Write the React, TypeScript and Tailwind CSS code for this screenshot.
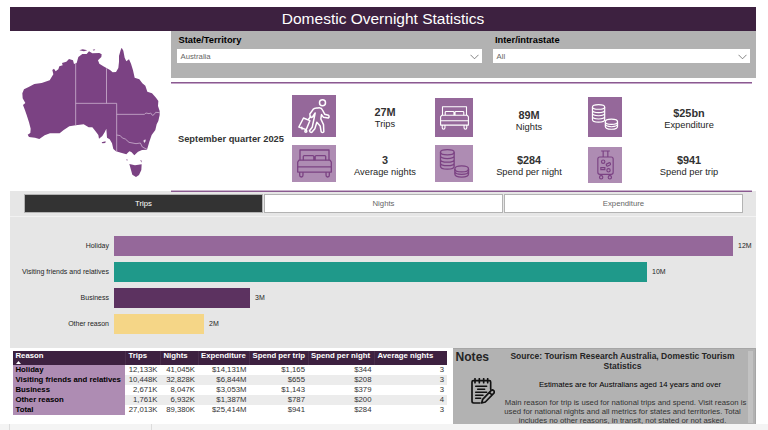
import type { ReactNode } from 'react'

const bars = [
  { label: 'Holiday', value: '12M', width: 619, color: 'bg-[#95689a]' },
  { label: 'Visiting friends and relatives', value: '10M', width: 533, color: 'bg-[#1f998a]' },
  { label: 'Business', value: '3M', width: 136, color: 'bg-[#5c3260]' },
  { label: 'Other reason', value: '2M', width: 90, color: 'bg-[#f5d687]' },
]

const rows = [
  ['Holiday', '12,133K', '41,045K', '$14,131M', '$1,165', '$344', '3'],
  ['Visiting friends and relatives', '10,448K', '32,828K', '$6,844M', '$655', '$208', '3'],
  ['Business', '2,671K', '8,047K', '$3,053M', '$1,143', '$379', '3'],
  ['Other reason', '1,761K', '6,932K', '$1,387M', '$787', '$200', '4'],
  ['Total', '27,013K', '89,380K', '$25,414M', '$941', '$284', '3'],
]

const headers = ['Trips', 'Nights', 'Expenditure', 'Spend per trip', 'Spend per night', 'Average nights']

function AustraliaMap() {
  return (
    <svg viewBox="0 -12 483 480" className="h-[160px] w-[161px] shrink-0">
      <g fill="#7b4283">
        <path d="M335 38L340 47L344 68L349 79L357 73L363 86L366 96L369 106L374 128L388 133L397 145L406 152L412 170L426 175L438 188L445 198L444 213L449 228L449 240L445 258L440 268L436 285L425 300L418 320L411 344L396 345L384 350L373 361L364 351L358 349L349 358L333 353L318 349L310 342L306 325L299 313L291 308L289 281L284 292L277 303L267 311L265 300L256 288L247 277L236 277L221 268L197 271L178 274L160 286L149 295L120 295L104 301L88 312L75 308L57 306L53 299L61 294L62 281L57 262L50 240L45 226L39 210L46 204L38 190L37 175L42 163L56 156L73 147L95 144L119 136L130 118L127 105L132 101L137 109L145 103L148 94L158 91L156 84L169 80L177 72L189 76L192 87L200 84L205 66L217 57L230 57L237 49L247 55L268 54L275 58L274 66L264 76L268 86L280 94L300 105L308 112L318 111L325 99L327 80L327 63L332 45Z" />
        <path d="M358 387L375 391L395 388L394 405L387 420L378 426L367 419L363 405Z" />
        <path d="M208 46L218 43L232 46L222 49ZM275 322L287 319L286 324L277 325ZM248 44L256 43L252 47ZM391 374L395 377L394 383ZM349 372L353 374L351 378Z" />
      </g>
      <g fill="none" stroke="#c9adcd" strokeWidth="2.5">
        <path d="M197 84V271M289.500 100V205M197 205H320V350M320 238H403L408 234L417 236L422 234L427 241L432 239L437 232L449 233" />
        <path d="M320 300L331 302L337 309L346 312L357 322L378 326L391 324L397 336L411 343" />
      </g>
      <path d="M400 317L406 313L407 318L403 324Z" fill="#efe4f0" />
    </svg>
  )
}

function Traveller() {
  return (
    <svg viewBox="0 0 131 126" className="h-[42px] w-[44px]" fill="none" stroke="#fff" strokeWidth="4.500" strokeLinejoin="round" strokeLinecap="round">
      <circle cx="91" cy="23" r="9" />
      <path d="M54 65L53 57L63 43Q67 38 77 39Q88 37 91 45L98 58L109 61Q113 66 108 69L94 67L88 59L86 72L94 89L95 110Q91 115 87 110L84 93L74 82L68 101L59 112Q53 113 52 107L60 97L66 69L69 54L61 66Q57 69 54 65Z" />
      <path d="M34 69L53 77L42 104L20 96ZM48 74L56 64M29 97L30 102" />
      <circle cx="41" cy="109" r="3" />
    </svg>
  )
}

function Bed({ className, color }: { className: string; color: string }) {
  return (
    <svg viewBox="0 0 106 88" className={className} fill="none" stroke={color} strokeWidth="4" strokeLinejoin="round">
      <path d="M9 34V3H97V34M19 34V23Q19 20 22 20H48Q51 20 51 23V34M55 34V23Q55 20 58 20H84Q87 20 87 23V34" />
      <path d="M6 34H100L104 40V70H2V40ZM2 54H104M8 70V80Q8 85 13 85T18 80V70M88 70V80Q88 85 93 85T98 80V70" />
    </svg>
  )
}

function Coins({ className, color }: { className: string; color: string }) {
  return (
    <svg viewBox="0 0 92 89" className={className} fill="none" stroke={color} strokeWidth="4">
      <ellipse cx="24" cy="10" rx="21" ry="8" />
      <path d="M3 10V53C3 65 45 65 45 53V10M3 21C3 32 45 32 45 21M3 32C3 43 45 43 45 32M3 43C3 54 45 54 45 43" />
      <ellipse cx="68" cy="61" rx="21" ry="9" />
      <path d="M47 61V76C47 90 89 90 89 76V61M47 68C47 81 89 81 89 68" />
    </svg>
  )
}

function Luggage() {
  return (
    <svg viewBox="0 0 50 90" className="h-[30px] w-[17px]" fill="none" stroke="#7b4283" strokeWidth="3.5">
      <rect x="2" y="21" width="46" height="52" rx="6" />
      <path d="M12 3H38M18 3V21M32 3V21M12 73V78M38 73V78" />
      <circle cx="12" cy="82" r="5" />
      <circle cx="38" cy="82" r="5" />
      <circle cx="18" cy="35" r="5" />
      <rect x="27" y="40" width="13" height="7" rx="3" transform="rotate(-25 33 43)" />
      <path d="M11 53H23V59H11Z" />
      <circle cx="34" cy="61" r="5" />
    </svg>
  )
}

function NotepadIcon() {
  return (
    <svg viewBox="0 0 72 78" className="h-[26px] w-[24px]" fill="none" stroke="#111" strokeWidth="5" strokeLinecap="round" strokeLinejoin="round">
      <path d="M59 34V12Q59 8 55 8H7Q3 8 3 12V70Q3 75 8 75H27M12 2V14M25 2V14M38 2V14M50 2V14" />
      <path d="M14 25H47M20 34H41M14 43H47M14 52H36M14 61H29" strokeWidth="4.500" />
      <path d="M60 38Q64 34 68 38T68 46L43 72L32 75L35 64ZM55 43L63 51" />
    </svg>
  )
}

function Select({ value }: { value: string }) {
  return (
    <div className="flex h-[14px] items-center justify-between bg-white pt-px pr-[3px] pl-[3.500px] text-[7.75px] text-[#666]">
      <span>{value}</span>
      <svg viewBox="0 0 9 6" className="h-[6px] w-[9px]" fill="none" stroke="#666" strokeWidth="0.8">
        <path d="M0.500 0.800L4.500 4.800L8.500 0.800" />
      </svg>
    </div>
  )
}

function Tile({ className, children }: { className: string; children: ReactNode }) {
  return <div className={`flex items-center justify-center ${className}`}>{children}</div>
}

function Metric({ value, label }: { value: string; label: string }) {
  return (
    <div className="text-center whitespace-nowrap">
      <div className="text-[10.9px] leading-[12px] font-bold text-[#333]">{value}</div>
      <div className="text-[9.3px] leading-[12px] text-[#252525]">{label}</div>
    </div>
  )
}

export default function App() {
  return (
    <div className="flex h-[430px] w-[768px] flex-col overflow-hidden bg-white pt-[7px] font-['Liberation_Sans',Arial,sans-serif]">
      <div className="ml-[10px] w-[746px]">
        <header className="flex h-[24px] items-center justify-center bg-[#3d2140] pb-px text-[15.5px] text-white">
          Domestic Overnight Statistics
        </header>

        <div className="flex h-[160px]">
          <AustraliaMap />
          <div className="flex w-[585px] flex-col">
            <div className="flex h-[46.500px] shrink-0 bg-[#b2b2b2] pl-[6px]">
              <div className="w-[305px]">
                <div className="h-[18px] pt-[2.500px] pl-[1.500px] text-[9.3px] leading-[12px] font-bold">State/Territory</div>
                <Select value="Australia" />
              </div>
              <div className="ml-[11px] w-[257px]">
                <div className="h-[18px] pt-[2.500px] pl-[2px] text-[9.3px] leading-[12px] font-bold">Inter/intrastate</div>
                <Select value="All" />
              </div>
            </div>
            <div className="mt-[4.500px] h-[2px] w-[581px] shrink-0 border-t border-[#8a5a90] bg-[#c4a5c8]" />

            <div className="flex h-[106px] shrink-0">
              <div className="w-[121px] pt-[49px] pl-[7px] text-[9.3px] leading-[12px] font-bold whitespace-nowrap text-[#333]">
                September quarter 2025
              </div>
              <div className="flex w-[44px] flex-col gap-2 pt-[11px]">
                <Tile className="h-[42px] bg-[#95689a]">
                  <Traveller />
                </Tile>
                <Tile className="h-[37px] bg-[#ae8cb3]">
                  <Bed className="h-[29px] w-[35px]" color="#7b4283" />
                </Tile>
              </div>
              <div className="flex w-[98px] flex-col gap-[24px] pt-[22px]">
                <Metric value="27M" label="Trips" />
                <Metric value="3" label="Average nights" />
              </div>
              <div className="ml-px flex w-[38px] flex-col gap-2 pt-[14px]">
                <Tile className="h-[39px] bg-[#95689a]">
                  <Bed className="h-[24px] w-[29px]" color="#fff" />
                </Tile>
                <Tile className="h-[37px] bg-[#ae8cb3]">
                  <Coins className="h-[29px] w-[31px]" color="#7b4283" />
                </Tile>
              </div>
              <div className="flex w-[112px] flex-col gap-[21px] pt-[25px]">
                <Metric value="89M" label="Nights" />
                <Metric value="$284" label="Spend per night" />
              </div>
              <div className="ml-[3px] flex w-[34px] flex-col gap-[10px] pt-[13px]">
                <Tile className="h-[40px] bg-[#95689a]">
                  <Coins className="h-[26px] w-[28px]" color="#fff" />
                </Tile>
                <Tile className="h-[36px] bg-[#ae8cb3]">
                  <Luggage />
                </Tile>
              </div>
              <div className="flex w-[134px] flex-col gap-[23px] pt-[23px]">
                <Metric value="$25bn" label="Expenditure" />
                <Metric value="$941" label="Spend per trip" />
              </div>
            </div>
            <div className="h-[2px] w-[581px] shrink-0 border-t border-[#c9b3cc] bg-[#8a5a90]" />
          </div>
        </div>

        <section className="h-[157px] bg-[#e6e6e6]">
          <div className="flex h-[26px] gap-px border-b border-[#f2f2f2] pt-[3px] pl-[14px] text-[7.75px]">
            <div className="flex h-[19px] w-[239px] items-center justify-center border border-[#b3b3b3] bg-[#333] text-white">Trips</div>
            <div className="flex h-[19px] w-[239px] items-center justify-center border border-[#b3b3b3] bg-white text-[#666]">Nights</div>
            <div className="flex h-[19px] w-[239px] items-center justify-center border border-[#b3b3b3] bg-white text-[#666]">Expenditure</div>
          </div>
          <div className="flex flex-col gap-[6.200px] pt-[18.500px] text-[7px] text-[#252525]">
            {bars.map((b) => (
              <div key={b.label} className="flex h-[20px] items-center">
                <div className="w-[99px] pt-px text-right whitespace-nowrap">{b.label}</div>
                <div className={`ml-[5px] h-full ${b.color}`} style={{ width: b.width }} />
                <div className="ml-[5px] pt-px">{b.value}</div>
              </div>
            ))}
          </div>
        </section>

        <div className="flex h-[76px]">
          <div className="w-[443px] pt-[2.500px] pl-[3px]">
            <div className="w-[433.500px] text-[7.75px]">
              <div className="grid h-[14.500px] grid-cols-[112px_35px_37.5px_51.5px_58.5px_66.5px_72.5px] bg-[#3d2140] leading-[10px] font-bold whitespace-nowrap text-white">
                <div className="flex flex-col pl-[2.500px]">
                  Reason
                  <svg viewBox="0 0 5 3" className="h-[3px] w-[5px]">
                    <path d="M0 3L2.500 0L5 3Z" fill="#fff" />
                  </svg>
                </div>
                {headers.map((h) => (
                  <div key={h} className="border-l border-[#4a2f4d] pl-[2.500px]">
                    {h}
                  </div>
                ))}
              </div>
              {rows.map((r) => (
                <div
                  key={r[0]}
                  className="grid h-[10px] grid-cols-[112px_35px_37.5px_51.5px_58.5px_66.5px_72.5px] leading-[10px] whitespace-nowrap text-[#333] even:bg-white odd:bg-[#ececec]"
                >
                  {r.map((cell, i) => (
                    <div
                      key={i}
                      className={i === 0 ? 'bg-[#ae8cb3] pl-[2.500px] font-bold text-black' : 'pr-[2.500px] text-right'}
                    >
                      {cell}
                    </div>
                  ))}
                </div>
              ))}
            </div>
          </div>

          <aside className="flex w-[303px] overflow-hidden border-t border-r border-[#a6a6a6] bg-[#b2b2b2]">
            <div className="w-[50px] shrink-0 pt-px pl-[2.500px]">
              <div className="text-[12.100px] leading-[14px] font-bold text-[#252525]">Notes</div>
              <div className="pt-[14px] pl-[15px]">
                <NotepadIcon />
              </div>
            </div>
            <div className="w-[245px] shrink-0 pt-[2px] text-center whitespace-nowrap text-[#333]">
              <div className="pr-[6px] text-[8.500px] leading-[10px] font-bold text-[#252525]">
                Source: Tourism Research Australia, Domestic Tourism
                <br />
                Statistics
              </div>
              <div className="pt-[9px] pl-[9px] text-[7.75px] leading-[10px] text-black">
                Estimates are for Australians aged 14 years and over
              </div>
              <div className="pt-[8px] text-[7.75px] leading-[9px]">
                Main reason for trip is used for national trips and spend. Visit reason is
                <br />
                <span className="pr-[6px]">used for national nights and all metrics for states and territories. Total</span>
                <br />
                <span className="pr-[6px]">includes no other reasons, in transit, not stated or not asked.</span>
              </div>
            </div>
            <div className="mt-[2px] h-[72px] w-[5px] bg-[#c2c2c2]" />
          </aside>
        </div>
      </div>
      <footer className="flex h-[6px] bg-[#f4f4f4]">
        <div className="w-[10px] border-r border-[#dcdcdc]" />
        <div className="w-[142px] border-r border-[#dcdcdc]" />
      </footer>
    </div>
  )
}
